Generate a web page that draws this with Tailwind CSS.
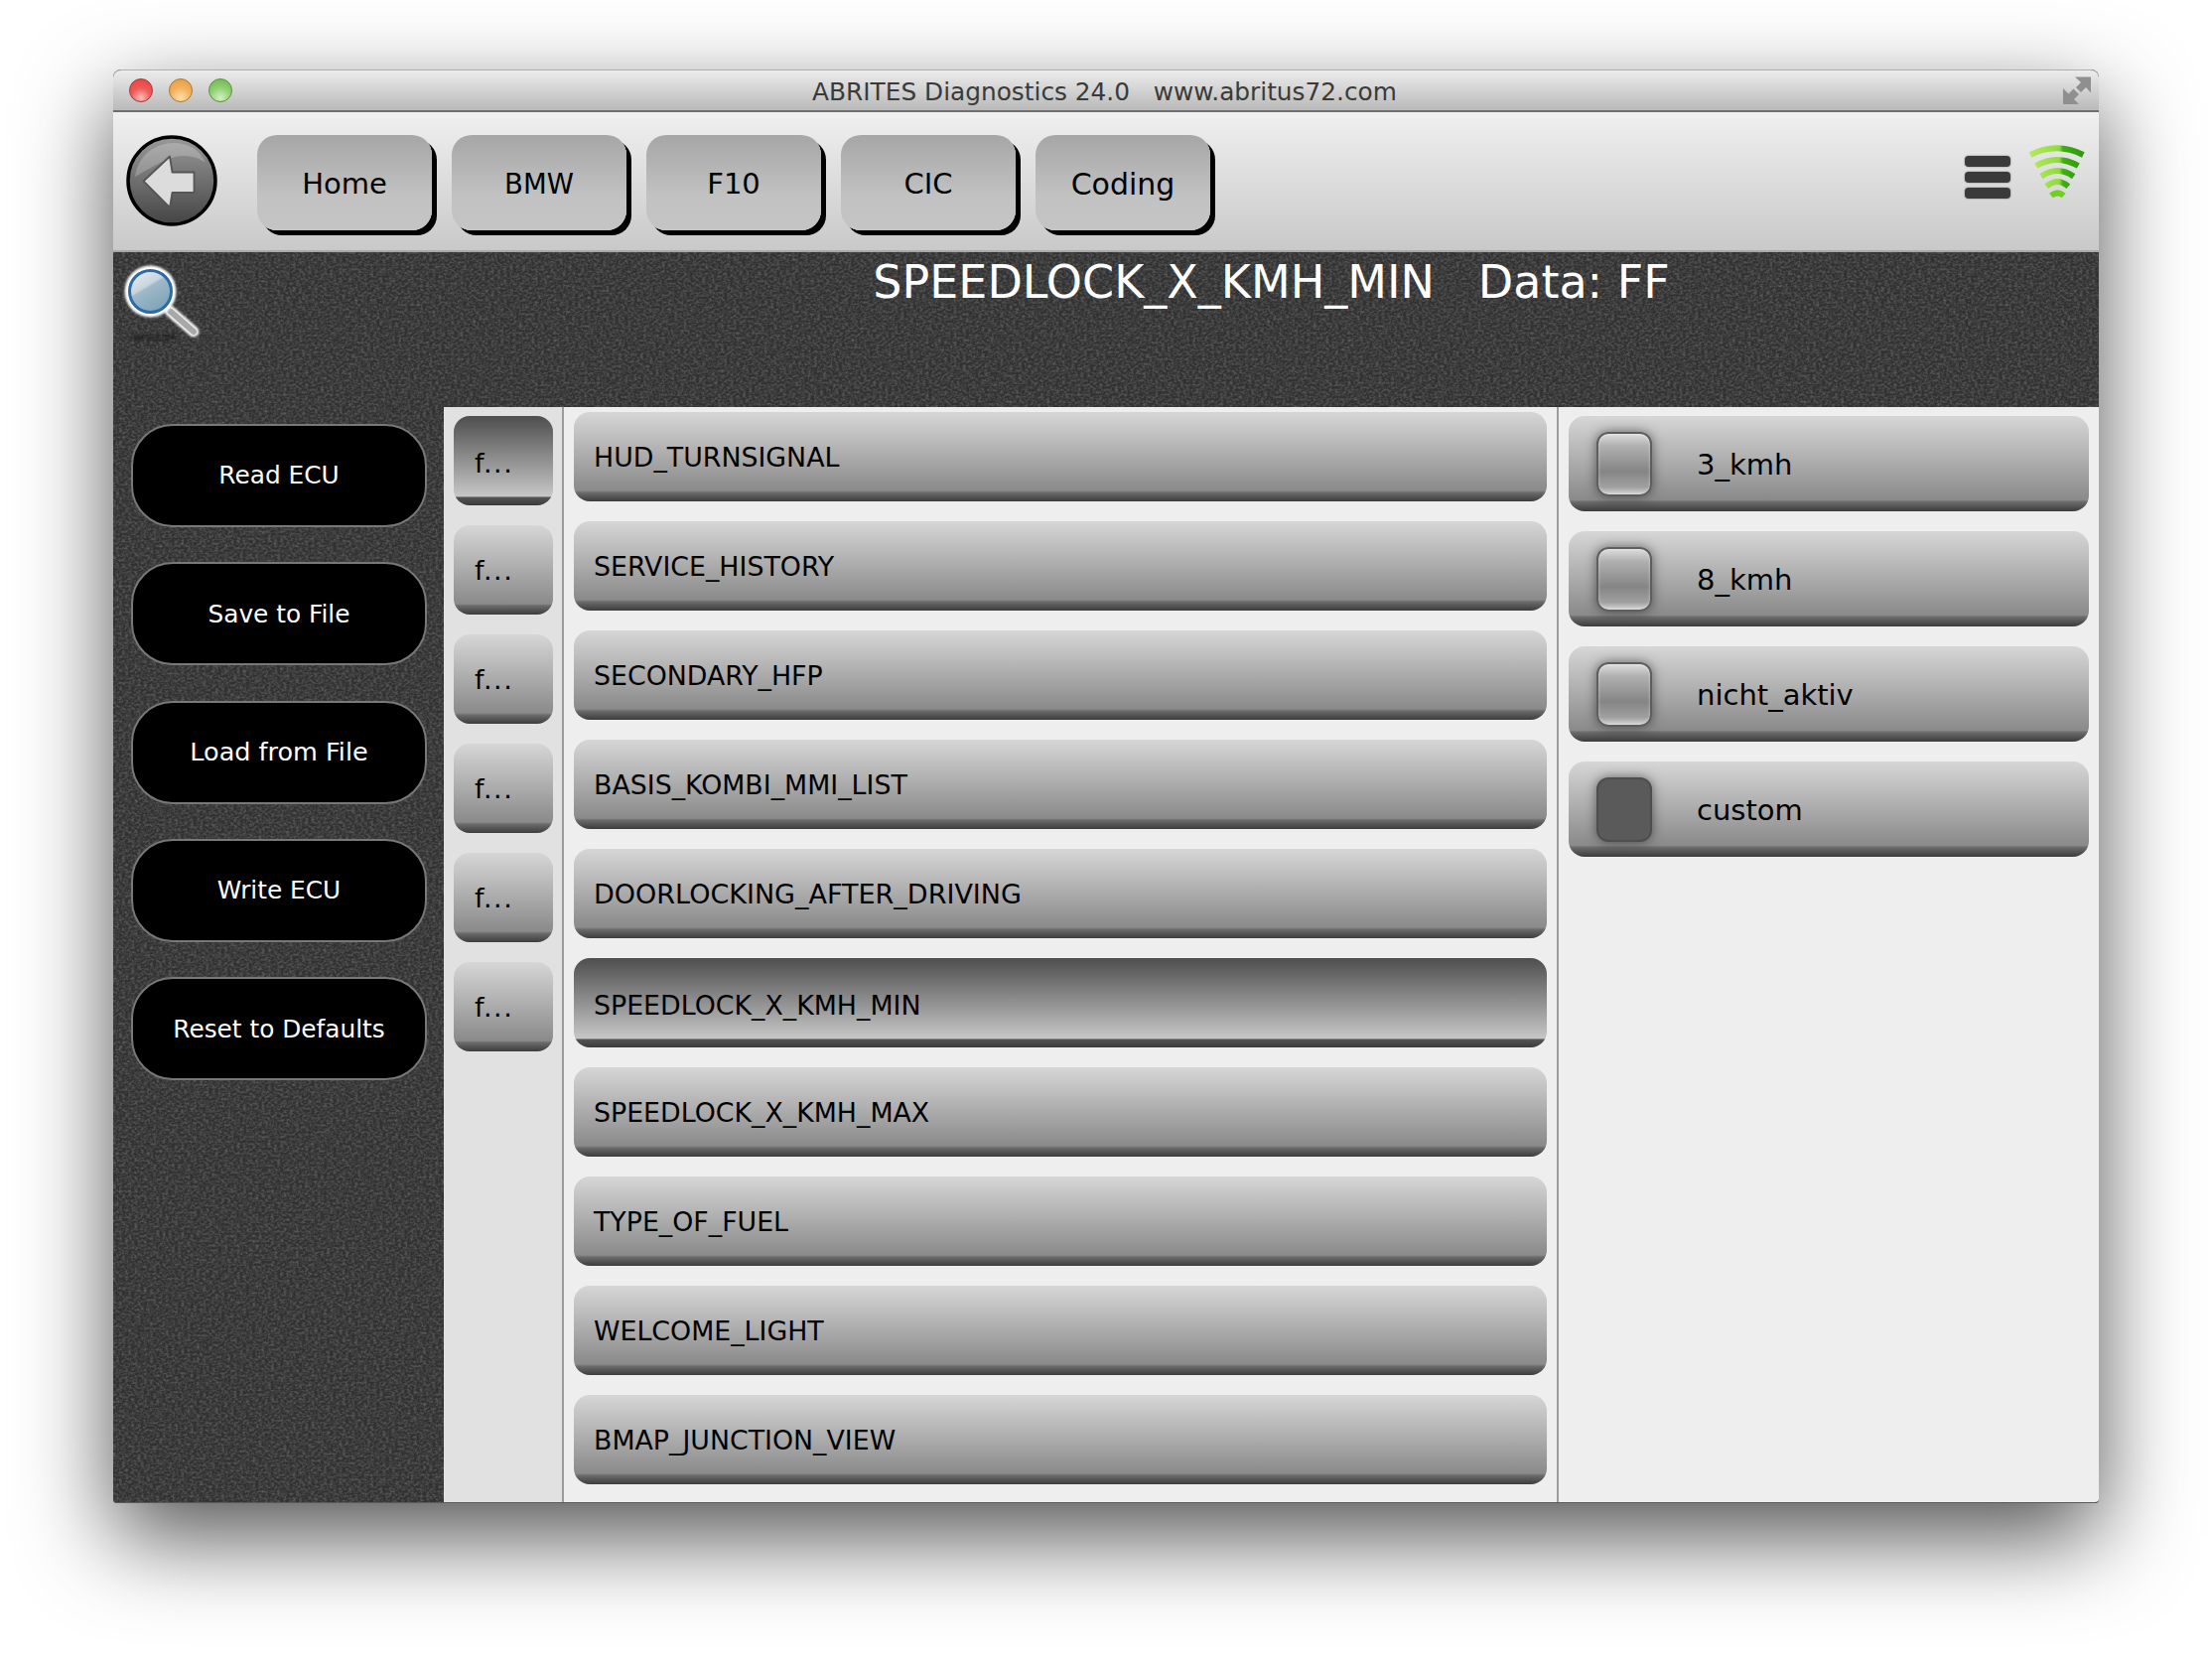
<!DOCTYPE html>
<html lang="en">
<head>
    <meta charset="UTF-8">
    <title>ABRITES Diagnostics 24.0</title>
    <script src="https://cdn.jsdelivr.net/npm/@tailwindcss/browser@4"></script>
</head>
<body class="bg-white h-[1672px] overflow-hidden pt-[70px] pl-[114px] font-['DejaVu_Sans',sans-serif] text-black">
    <div class="w-[2000px] h-[1444px] flex flex-col rounded-t-[8px] rounded-b-[4px] shadow-[0_34px_92px_rgba(0,0,0,0.68)] bg-[#3b3b3b]">

        <!-- title bar -->
        <div class="h-[43px] shrink-0 grid grid-cols-[1fr_auto_1fr] items-center rounded-t-[8px] border-t border-[#b0b0b0] border-b-2 border-b-[#6e6e6e] bg-[linear-gradient(180deg,#ececec,#b9b9b9)]">
            <div class="flex gap-[16px] pl-[16px]">
                <div class="w-[24px] h-[24px] rounded-full border border-[#9c3a3a] bg-[radial-gradient(circle_at_50%_85%,#f6c0b8_0%,#f25a5a_45%,#e64040_100%)]"></div>
                <div class="w-[24px] h-[24px] rounded-full border border-[#a87a34] bg-[radial-gradient(circle_at_50%_85%,#f9dfae_0%,#f2b05a_50%,#e89a3c_100%)]"></div>
                <div class="w-[24px] h-[24px] rounded-full border border-[#5c9040] bg-[radial-gradient(circle_at_50%_85%,#d4eec4_0%,#8fd070_50%,#68b548_100%)]"></div>
            </div>
            <div class="text-[24.8px] leading-none text-[#3a3a3a] whitespace-pre pt-[4px] pr-[3px]">ABRITES Diagnostics 24.0   www.abritus72.com</div>
            <div class="flex justify-end pr-[6px]">
                <svg width="32" height="32" viewBox="0 0 32 32" fill="#8f8f8f">
                    <polygon points="14,2.5 30,2.5 30,18.5 25,13 20,18 15,13 20,8"/>
                    <polygon points="2,14 2,30 18,30 13,25 18,20 12.5,14.5 7.5,19.5"/>
                </svg>
            </div>
        </div>

        <!-- toolbar -->
        <div class="h-[141px] shrink-0 flex items-start pl-[13px] border-b-2 border-[#a8a8a8] bg-[linear-gradient(180deg,#f0f0f0,#c9c9c9)]">
            <svg class="mt-[23px] shrink-0" width="92" height="92" viewBox="0 0 92 92">
                <defs>
                    <linearGradient id="backFill" x1="0" y1="0" x2="0" y2="1">
                        <stop offset="0" stop-color="#9a9a9a"/>
                        <stop offset="1" stop-color="#444"/>
                    </linearGradient>
                </defs>
                <circle cx="46" cy="46" r="44" fill="url(#backFill)" stroke="#000" stroke-width="3.5"/>
                <path d="M9 42 C12 20 30 8 48 8 C62 8 74 14 80 28 C66 18 50 20 38 26 C26 32 16 38 9 42Z" fill="#fff" fill-opacity="0.22"/>
                <path d="M17.5 46.5 L44 21.5 L46.5 37.5 L68.5 37.5 L68.5 58 L46.5 58 L44 73 Z" fill="#dcdcdc" stroke="#555" stroke-width="1.8" stroke-linejoin="round"/>
            </svg>
            <div class="flex gap-[20px] ml-[40px] mt-[23px]">
                <div class="w-[176px] h-[96px] flex items-center justify-center rounded-[20px] shadow-[5px_5px_0_#000] bg-[linear-gradient(180deg,#a6a6a6,#c2c2c2_65%,#c4c4c4)] text-[29px] pt-[3px]">Home</div>
                <div class="w-[176px] h-[96px] flex items-center justify-center rounded-[20px] shadow-[5px_5px_0_#000] bg-[linear-gradient(180deg,#a6a6a6,#c2c2c2_65%,#c4c4c4)] text-[27.5px] pt-[3px]">BMW</div>
                <div class="w-[176px] h-[96px] flex items-center justify-center rounded-[20px] shadow-[5px_5px_0_#000] bg-[linear-gradient(180deg,#a6a6a6,#c2c2c2_65%,#c4c4c4)] text-[29px] pt-[3px]">F10</div>
                <div class="w-[176px] h-[96px] flex items-center justify-center rounded-[20px] shadow-[5px_5px_0_#000] bg-[linear-gradient(180deg,#a6a6a6,#c2c2c2_65%,#c4c4c4)] text-[29px] pt-[3px]">CIC</div>
                <div class="w-[176px] h-[96px] flex items-center justify-center rounded-[20px] shadow-[5px_5px_0_#000] bg-[linear-gradient(180deg,#a6a6a6,#c2c2c2_65%,#c4c4c4)] text-[30px] pt-[2px]">Coding</div>
            </div>
            <div class="ml-auto flex items-start">
                <div class="flex flex-col gap-[5px] mt-[44px] w-[46px]">
                    <div class="h-[11px] rounded-[4px] bg-[#3a3a3a] shadow-[0_0_2px_#777]"></div>
                    <div class="h-[11px] rounded-[4px] bg-[#3a3a3a] shadow-[0_0_2px_#777]"></div>
                    <div class="h-[11px] rounded-[4px] bg-[#3a3a3a] shadow-[0_0_2px_#777]"></div>
                </div>
                <svg class="mt-[28px] ml-[15px] mr-[10px]" width="64" height="70" viewBox="0 0 64 70" fill="none" stroke-linecap="butt">
                    <defs>
                        <linearGradient id="wifiGreen" gradientUnits="userSpaceOnUse" x1="5" y1="0" x2="58" y2="0">
                            <stop offset="0" stop-color="#b4ea60"/>
                            <stop offset="0.55" stop-color="#8fdc3c"/>
                            <stop offset="0.62" stop-color="#3fae12"/>
                            <stop offset="1" stop-color="#2f9a0c"/>
                        </linearGradient>
                    </defs>
                    <path d="M5 15 Q31.7 1.6 58.3 15" stroke="url(#wifiGreen)" stroke-width="6"/>
                    <path d="M10.7 26 Q32 14 53.3 26" stroke="url(#wifiGreen)" stroke-width="6"/>
                    <path d="M16 36.7 Q32.3 25.3 48.7 36.7" stroke="url(#wifiGreen)" stroke-width="6"/>
                    <path d="M21.3 46.7 Q32.3 37.3 43.3 46.7" stroke="url(#wifiGreen)" stroke-width="6"/>
                    <path d="M26 56 Q32.3 50.6 38.7 56" stroke="#6fd020" stroke-width="6"/>
                </svg>
            </div>
        </div>

        <!-- main area: dark linen behind the sidebar and the title -->
        <div class="relative flex-1 flex min-h-0 rounded-b-[4px] overflow-hidden border-b border-[#5a5a5a]">
            <svg class="absolute inset-0 w-full h-full" aria-hidden="true">
                <filter id="linen">
                    <feTurbulence type="fractalNoise" baseFrequency="0.32 0.42" numOctaves="3" seed="4"/>
                    <feColorMatrix type="matrix" values="0 0 0 0 1  0 0 0 0 1  0 0 0 0 1  0.9 0 0 0 -0.32"/>
                </filter>
                <rect width="100%" height="100%" fill="#313131"/>
                <rect width="100%" height="100%" filter="url(#linen)" opacity="0.45"/>
            </svg>

            <!-- sidebar -->
            <div class="relative w-[333px] shrink-0 flex flex-col">
                <div class="h-[173px] shrink-0 pl-[6px] pt-[6px]">
                    <svg width="90" height="90" viewBox="0 0 90 90">
                        <defs>
                            <linearGradient id="lensFill" x1="0" y1="0" x2="0.6" y2="1">
                                <stop offset="0" stop-color="#eef1f4"/>
                                <stop offset="0.45" stop-color="#c8d4dc"/>
                                <stop offset="0.5" stop-color="#9fb9c8"/>
                                <stop offset="1" stop-color="#7fa4b8"/>
                            </linearGradient>
                            <filter id="softGlow" x="-30%" y="-30%" width="160%" height="160%">
                                <feGaussianBlur stdDeviation="1"/>
                            </filter>
                            <filter id="softShade" x="-30%" y="-200%" width="160%" height="500%">
                                <feGaussianBlur stdDeviation="2"/>
                            </filter>
                        </defs>
                        <ellipse cx="35" cy="80" rx="26" ry="2" fill="#111" fill-opacity="0.6" filter="url(#softShade)"/>
                        <path d="M51.5 53.5 L75 74" stroke="#f4f4f4" stroke-width="11" stroke-linecap="round" filter="url(#softGlow)"/>
                        <path d="M51.5 53.5 L75 74" stroke="#a8a8a8" stroke-width="6" stroke-linecap="round"/>
                        <circle cx="31.5" cy="33.5" r="26" fill="#fff" filter="url(#softGlow)"/>
                        <circle cx="31.5" cy="33.5" r="21" fill="url(#lensFill)" stroke="#2a6ca8" stroke-width="3"/>
                    </svg>
                </div>
                <div class="flex flex-col gap-[35.3px] pl-[18px]">
                    <div class="w-[298px] h-[104px] flex items-center justify-center rounded-[42px] bg-black border-2 border-[#787878] text-white text-[24.8px]">Read ECU</div>
                    <div class="w-[298px] h-[104px] flex items-center justify-center rounded-[42px] bg-black border-2 border-[#787878] text-white text-[24.8px]">Save to File</div>
                    <div class="w-[298px] h-[104px] flex items-center justify-center rounded-[42px] bg-black border-2 border-[#787878] text-white text-[25.5px]">Load from File</div>
                    <div class="w-[298px] h-[104px] flex items-center justify-center rounded-[42px] bg-black border-2 border-[#787878] text-white text-[24.8px]">Write ECU</div>
                    <div class="w-[298px] h-[104px] flex items-center justify-center rounded-[42px] bg-black border-2 border-[#787878] text-white text-[24.8px]">Reset to Defaults</div>
                </div>
            </div>

            <div class="relative flex-1 flex flex-col min-w-0">
                <div class="h-[156px] shrink-0 text-center text-white text-[46px] leading-none pt-[7px] whitespace-pre">SPEEDLOCK_X_KMH_MIN   Data: FF</div>

                <div class="flex-1 flex min-h-0">
                    <!-- short column -->
                    <div class="w-[121px] shrink-0 bg-[#e1e1e1] border-r-2 border-[#9c9c9c] pl-[10px] pt-[9px] flex flex-col gap-[20px]">
                        <div class="w-[100px] h-[90px] shrink-0 flex items-center pl-[21px] pt-[6px] rounded-[16px] text-[27px] tracking-[1.5px] bg-[linear-gradient(180deg,#4e4e4e_0%,#c4c4c4_88%,#c6c6c6_90%,#555_91%,#3a3a3a_100%)]">f...</div>
                        <div class="w-[100px] h-[90px] shrink-0 flex items-center pl-[21px] pt-[2px] rounded-[16px] text-[27px] tracking-[1.5px] bg-[linear-gradient(180deg,#d6d6d6_0%,#8a8a8a_88%,#6c6c6c_90%,#3c3c3c_100%)]">f...</div>
                        <div class="w-[100px] h-[90px] shrink-0 flex items-center pl-[21px] pt-[2px] rounded-[16px] text-[27px] tracking-[1.5px] bg-[linear-gradient(180deg,#d6d6d6_0%,#8a8a8a_88%,#6c6c6c_90%,#3c3c3c_100%)]">f...</div>
                        <div class="w-[100px] h-[90px] shrink-0 flex items-center pl-[21px] pt-[2px] rounded-[16px] text-[27px] tracking-[1.5px] bg-[linear-gradient(180deg,#d6d6d6_0%,#8a8a8a_88%,#6c6c6c_90%,#3c3c3c_100%)]">f...</div>
                        <div class="w-[100px] h-[90px] shrink-0 flex items-center pl-[21px] pt-[2px] rounded-[16px] text-[27px] tracking-[1.5px] bg-[linear-gradient(180deg,#d6d6d6_0%,#8a8a8a_88%,#6c6c6c_90%,#3c3c3c_100%)]">f...</div>
                        <div class="w-[100px] h-[90px] shrink-0 flex items-center pl-[21px] pt-[2px] rounded-[16px] text-[27px] tracking-[1.5px] bg-[linear-gradient(180deg,#d6d6d6_0%,#8a8a8a_88%,#6c6c6c_90%,#3c3c3c_100%)]">f...</div>
                    </div>

                    <!-- parameter list -->
                    <div class="w-[1002px] shrink-0 bg-[#eeeeee] border-r-2 border-[#9c9c9c] pl-[10px] pt-[5px] flex flex-col gap-[20px]">
                        <div class="w-[980px] h-[90px] shrink-0 flex items-center pl-[20px] pt-[2px] rounded-[16px] text-[26.8px] bg-[linear-gradient(180deg,#d6d6d6_0%,#8a8a8a_88%,#6c6c6c_90%,#3c3c3c_100%)]">HUD_TURNSIGNAL</div>
                        <div class="w-[980px] h-[90px] shrink-0 flex items-center pl-[20px] pt-[2px] rounded-[16px] text-[26.8px] bg-[linear-gradient(180deg,#d6d6d6_0%,#8a8a8a_88%,#6c6c6c_90%,#3c3c3c_100%)]">SERVICE_HISTORY</div>
                        <div class="w-[980px] h-[90px] shrink-0 flex items-center pl-[20px] pt-[2px] rounded-[16px] text-[26.8px] bg-[linear-gradient(180deg,#d6d6d6_0%,#8a8a8a_88%,#6c6c6c_90%,#3c3c3c_100%)]">SECONDARY_HFP</div>
                        <div class="w-[980px] h-[90px] shrink-0 flex items-center pl-[20px] pt-[2px] rounded-[16px] text-[26.8px] bg-[linear-gradient(180deg,#d6d6d6_0%,#8a8a8a_88%,#6c6c6c_90%,#3c3c3c_100%)]">BASIS_KOMBI_MMI_LIST</div>
                        <div class="w-[980px] h-[90px] shrink-0 flex items-center pl-[20px] pt-[2px] rounded-[16px] text-[27px] bg-[linear-gradient(180deg,#d6d6d6_0%,#8a8a8a_88%,#6c6c6c_90%,#3c3c3c_100%)]">DOORLOCKING_AFTER_DRIVING</div>
                        <div class="w-[980px] h-[90px] shrink-0 flex items-center pl-[20px] pt-[6px] rounded-[16px] text-[26.8px] bg-[linear-gradient(180deg,#4e4e4e_0%,#c4c4c4_88%,#c6c6c6_90%,#555_91%,#3a3a3a_100%)]">SPEEDLOCK_X_KMH_MIN</div>
                        <div class="w-[980px] h-[90px] shrink-0 flex items-center pl-[20px] pt-[2px] rounded-[16px] text-[26.8px] bg-[linear-gradient(180deg,#d6d6d6_0%,#8a8a8a_88%,#6c6c6c_90%,#3c3c3c_100%)]">SPEEDLOCK_X_KMH_MAX</div>
                        <div class="w-[980px] h-[90px] shrink-0 flex items-center pl-[20px] pt-[2px] rounded-[16px] text-[26.8px] bg-[linear-gradient(180deg,#d6d6d6_0%,#8a8a8a_88%,#6c6c6c_90%,#3c3c3c_100%)]">TYPE_OF_FUEL</div>
                        <div class="w-[980px] h-[90px] shrink-0 flex items-center pl-[20px] pt-[2px] rounded-[16px] text-[26.8px] bg-[linear-gradient(180deg,#d6d6d6_0%,#8a8a8a_88%,#6c6c6c_90%,#3c3c3c_100%)]">WELCOME_LIGHT</div>
                        <div class="w-[980px] h-[90px] shrink-0 flex items-center pl-[20px] pt-[2px] rounded-[16px] text-[26.8px] bg-[linear-gradient(180deg,#d6d6d6_0%,#8a8a8a_88%,#6c6c6c_90%,#3c3c3c_100%)]">BMAP_JUNCTION_VIEW</div>
                    </div>

                    <!-- options -->
                    <div class="flex-1 bg-[#eeeeee] px-[10px] pt-[9px] flex flex-col gap-[20px]">
                        <div class="h-[96px] shrink-0 flex items-center pl-[28px] gap-[45px] rounded-[16px] text-[29px] bg-[linear-gradient(180deg,#d6d6d6_0%,#8a8a8a_88%,#6c6c6c_90%,#3c3c3c_100%)]">
                            <div class="w-[56px] h-[65px] rounded-[12px] border-2 border-[#5e5e5e] shadow-[0_0_12px_rgba(0,0,0,0.5),inset_0_0_3px_rgba(255,255,255,0.5)] bg-[linear-gradient(180deg,#dedede_0%,#b0b0b0_20%,#858585_62%,#a0a0a0_88%,#d6d6d6_100%)]"></div>
                            <span class="pt-[4px]">3_kmh</span>
                        </div>
                        <div class="h-[96px] shrink-0 flex items-center pl-[28px] gap-[45px] rounded-[16px] text-[29px] bg-[linear-gradient(180deg,#d6d6d6_0%,#8a8a8a_88%,#6c6c6c_90%,#3c3c3c_100%)]">
                            <div class="w-[56px] h-[65px] rounded-[12px] border-2 border-[#5e5e5e] shadow-[0_0_12px_rgba(0,0,0,0.5),inset_0_0_3px_rgba(255,255,255,0.5)] bg-[linear-gradient(180deg,#dedede_0%,#b0b0b0_20%,#858585_62%,#a0a0a0_88%,#d6d6d6_100%)]"></div>
                            <span class="pt-[4px]">8_kmh</span>
                        </div>
                        <div class="h-[96px] shrink-0 flex items-center pl-[28px] gap-[45px] rounded-[16px] text-[29px] bg-[linear-gradient(180deg,#d6d6d6_0%,#8a8a8a_88%,#6c6c6c_90%,#3c3c3c_100%)]">
                            <div class="w-[56px] h-[65px] rounded-[12px] border-2 border-[#5e5e5e] shadow-[0_0_12px_rgba(0,0,0,0.5),inset_0_0_3px_rgba(255,255,255,0.5)] bg-[linear-gradient(180deg,#dedede_0%,#b0b0b0_20%,#858585_62%,#a0a0a0_88%,#d6d6d6_100%)]"></div>
                            <span class="pt-[4px]">nicht_aktiv</span>
                        </div>
                        <div class="h-[96px] shrink-0 flex items-center pl-[28px] gap-[45px] rounded-[16px] text-[29px] bg-[linear-gradient(180deg,#d6d6d6_0%,#8a8a8a_88%,#6c6c6c_90%,#3c3c3c_100%)]">
                            <div class="w-[56px] h-[65px] rounded-[12px] border-2 border-[#4e4e4e] shadow-[0_0_12px_rgba(0,0,0,0.5)] bg-[#5a5a5a]"></div>
                            <span class="pt-[4px]">custom</span>
                        </div>
                    </div>
                </div>
            </div>
        </div>
    </div>
</body>
</html>
